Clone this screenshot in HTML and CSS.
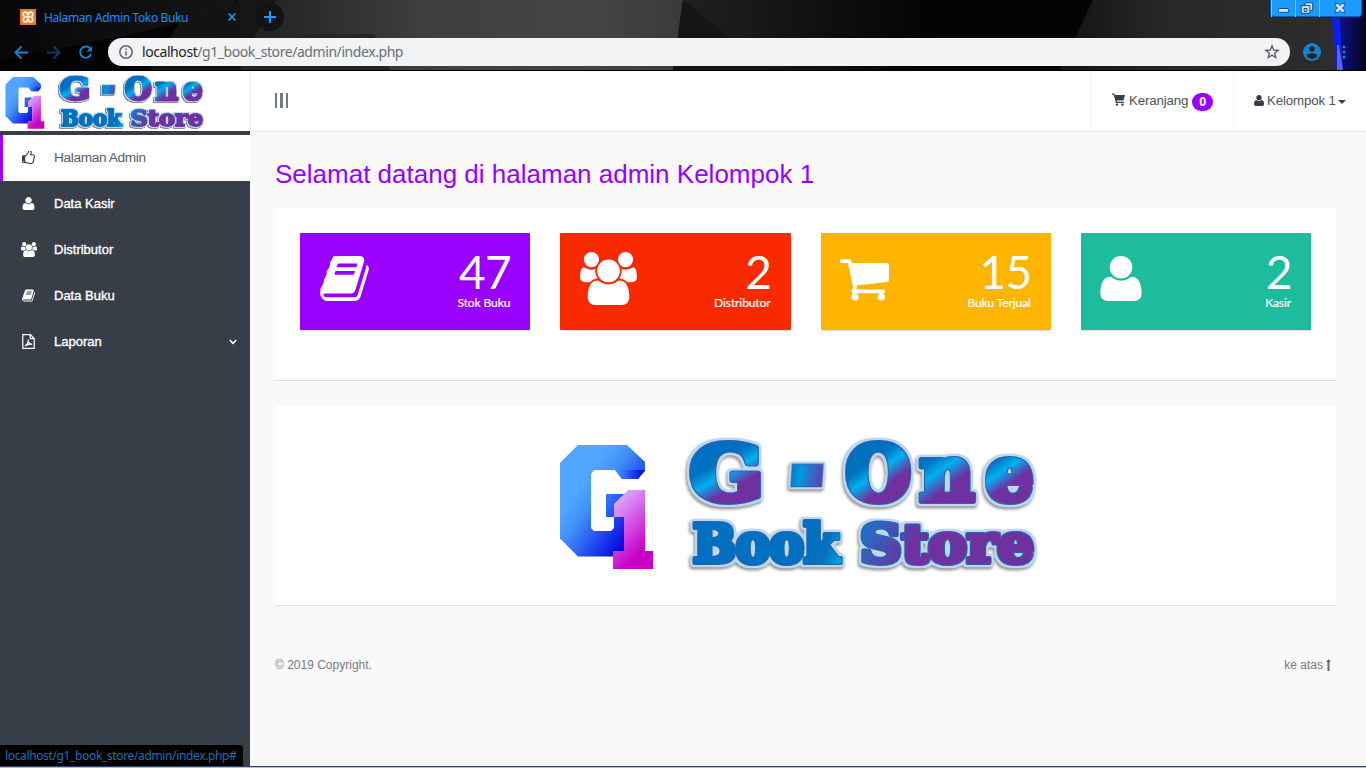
FILE: index.html
```html
<!DOCTYPE html>
<html lang="id">
<head>
<meta charset="utf-8">
<title>Halaman Admin Toko Buku</title>
<link rel="stylesheet" href="styles.css">
</head>
<body>
<svg class="sprite" aria-hidden="true">
  <defs>
    <linearGradient id="g-blue" gradientUnits="userSpaceOnUse" x1="560" y1="470" x2="645" y2="530"><stop offset=".25" stop-color="#4fa5ff"/><stop offset=".42" stop-color="#4292fa"/><stop offset=".95" stop-color="#0000e0"/></linearGradient>
    <linearGradient id="g-tip" x1="0" x2="1"><stop offset="0" stop-color="#4a9dfb"/><stop offset="1" stop-color="#0000e0"/></linearGradient>
    <linearGradient id="g-pink" x1="0" y1="0" x2=".5" y2="1"><stop offset=".1" stop-color="#dfb0ff"/><stop offset=".9" stop-color="#c800c8"/></linearGradient>
    <linearGradient id="w-g" gradientUnits="userSpaceOnUse" x1="704" y1="450" x2="744" y2="501"><stop offset=".28" stop-color="#0070c0"/><stop offset=".5" stop-color="#00b0f0"/><stop offset=".76" stop-color="#7030a0"/></linearGradient>
    <linearGradient id="w-d" gradientUnits="objectBoundingBox" x1="0" y1=".3" x2=".8" y2=".8"><stop offset=".1" stop-color="#0070c0"/><stop offset=".45" stop-color="#0098e0"/><stop offset="1" stop-color="#6a3aa8"/></linearGradient>
    <linearGradient id="w-o" gradientUnits="userSpaceOnUse" x1="858" y1="448" x2="896" y2="501"><stop offset=".28" stop-color="#0070c0"/><stop offset=".48" stop-color="#00b0f0"/><stop offset=".72" stop-color="#7030a0"/></linearGradient>
    <linearGradient id="w-n" gradientUnits="userSpaceOnUse" x1="926" y1="456" x2="960" y2="503"><stop offset=".1" stop-color="#0070c0"/><stop offset=".35" stop-color="#00b0f0"/><stop offset=".65" stop-color="#7030a0"/></linearGradient>
    <linearGradient id="w-e" gradientUnits="userSpaceOnUse" x1="992" y1="456" x2="1022" y2="500"><stop offset=".1" stop-color="#0070c0"/><stop offset=".35" stop-color="#00b0f0"/><stop offset=".62" stop-color="#7030a0"/></linearGradient>
    <linearGradient id="w-book" gradientUnits="userSpaceOnUse" x1="690" y1="520" x2="845" y2="566"><stop offset=".85" stop-color="#0070c0"/><stop offset="1" stop-color="#00b0f0"/></linearGradient>
    <linearGradient id="w-store" gradientUnits="userSpaceOnUse" x1="858" y1="535" x2="905" y2="560"><stop offset="0" stop-color="#1b74c8"/><stop offset="1" stop-color="#7030a0"/></linearGradient>
    <filter id="outline" filterUnits="userSpaceOnUse" x="675" y="430" width="375" height="150" color-interpolation-filters="sRGB">
      <feMorphology in="SourceAlpha" operator="dilate" radius=".6" result="a"/>
      <feFlood flood-color="#2b62ae"/><feComposite in2="a" operator="in" result="edge"/>
      <feMorphology in="SourceAlpha" operator="dilate" radius="3" result="m"/>
      <feGaussianBlur in="m" stdDeviation=".8" result="mb"/>
      <feComponentTransfer in="mb" result="b"><feFuncA type="linear" slope="2.6" intercept="-.6"/></feComponentTransfer>
      <feFlood flood-color="#bdd7ee"/><feComposite in2="b" operator="in" result="rim"/>
      <feOffset in="b" dx="-1.5" dy="2" result="o"/><feGaussianBlur in="o" stdDeviation="1.5" result="s"/>
      <feFlood flood-color="#000" flood-opacity=".45"/><feComposite in2="s" operator="in" result="shadow"/>
      <feMerge><feMergeNode in="shadow"/><feMergeNode in="rim"/><feMergeNode in="edge"/><feMergeNode in="SourceGraphic"/></feMerge>
    </filter>
    <symbol id="logo" viewBox="560 440 480 132" overflow="visible">
      <path fill="url(#g-blue)" d="M560 463l18-18h49l18 17v9l-7 8h-16l-7-9h-21l-3 4v54l3 3h17l3-3v-11h-8v-23h18v57h-10v5.500h-36l-18-18z"/>
      <path fill="url(#g-tip)" d="M615 470h30l-7 9h-16z"/>
      <path fill="url(#g-pink)" d="M614 504l14-14h17v61h8v18h-40v-18h11v-34h-10z"/>
      <g filter="url(#outline)" class="word">
        <text font-size="74" transform="translate(690 500) scale(1.16 1)" class="cap" fill="#0070c0"><tspan fill="url(#w-gl)" stroke="url(#w-gl)">G</tspan></text>
        <text font-size="74" transform="translate(784 519) skewX(-4) scale(1.3 2.2)" fill="url(#w-d)" class="dash">-</text>
        <text font-size="74" y="500" class="cap"><tspan x="846" fill="url(#w-o)" stroke="url(#w-o)">O</tspan><tspan x="920" fill="url(#w-n)" stroke="url(#w-n)">n</tspan><tspan x="986" fill="url(#w-e)" stroke="url(#w-e)">e</tspan></text>
        <text font-size="53" x="693" y="562" textLength="146" lengthAdjust="spacingAndGlyphs" fill="url(#w-book)" stroke="url(#w-book)">Book</text>
        <text font-size="53" x="860" y="562" textLength="174" lengthAdjust="spacingAndGlyphs" fill="url(#w-store)" stroke="url(#w-store)">Store</text>
      </g>
    </symbol>
    <linearGradient id="w-gl" gradientUnits="userSpaceOnUse" x1="12" y1="-50" x2="46" y2="1"><stop offset=".28" stop-color="#0070c0"/><stop offset=".5" stop-color="#00b0f0"/><stop offset=".74" stop-color="#7030a0"/></linearGradient>
    <symbol id="user" viewBox="0 0 1408 1536"><path transform="matrix(1 0 0 -1 0 1408)" d="M1408 131q0-120-73-189.5t-194-69.5h-874q-121 0-194 69.5t-73 189.5q0 53 3.5 103.5t14 109t26.5 108.5t43 97.5t62 81t85.5 53.5t111.5 20q9 0 42-21.5t74.5-48t108-48t133.5-21.5t133.5 21.5t108 48t74.5 48t42 21.5q61 0 111.5-20t85.5-53.5t62-81t43-97.5t26.5-108.5t14-109t3.5-103.5zM1088 1024q0-159-112.5-271.5t-271.5-112.5t-271.5 112.5t-112.5 271.5t112.5 271.5t271.5 112.5t271.5-112.5t112.5-271.5z"/></symbol>
    <symbol id="users" viewBox="0 0 1920 1792"><path transform="matrix(1 0 0 -1 0 1536)" d="M593 640q-162-5-265-128h-134q-82 0-138 40.5t-56 118.5q0 353 124 353q6 0 43.5-21t97.5-42.5t119-21.5q67 0 133 23q-5-37-5-66q0-139 81-256zM1664 3q0-120-73-189.5t-194-69.5h-874q-121 0-194 69.5t-73 189.5q0 53 3.5 103.5t14 109t26.5 108.5t43 97.5t62 81t85.5 53.5t111.5 20q10 0 43-21.5t73-48t107-48t135-21.5t135 21.5t107 48t73 48t43 21.5q61 0 111.5-20t85.5-53.5t62-81t43-97.5t26.5-108.5t14-109t3.5-103.5zM640 1280q0-106-75-181t-181-75t-181 75t-75 181t75 181t181 75t181-75t75-181zM1344 896q0-159-112.5-271.5t-271.5-112.5t-271.5 112.5t-112.5 271.5t112.5 271.5t271.5 112.5t271.5-112.5t112.5-271.5zM1920 671q0-78-56-118.5t-138-40.5h-134q-103 123-265 128q81 117 81 256q0 29-5 66q66-23 133-23q59 0 119 21.5t97.5 42.5t43.5 21q124 0 124-353zM1792 1280q0-106-75-181t-181-75t-181 75t-75 181t75 181t181 75t181-75t75-181z"/></symbol>
    <symbol id="book" viewBox="0 0 1664 1536"><path transform="matrix(1 0 0 -1 0 1408)" d="M1639 1058q40-57 18-129l-275-906q-19-64-76.5-107.5t-122.5-43.5h-923q-77 0-148.5 53.5t-99.5 131.5q-24 67-2 127q0 4 3 27t4 37q1 8-3 21.5t-3 19.5q2 11 8 21t16.5 23.5t16.5 23.5q23 38 45 91.5t30 91.5q3 10 .5 30t-.5 28q3 11 17 28t17 23q21 36 42 92t25 90q1 9-2.5 32t.5 28q4 13 22 30.5t22 22.5q19 26 42.5 84.5t27.5 96.5q1 8-3 25.5t-2 26.5q2 8 9 18t18 23t17 21q8 12 16.5 30.5t15 35t16 36t19.5 32t26.5 23.5t36 11.5t47.5-5.5l-1-3q38 9 51 9h761q74 0 114-56t18-130l-274-906q-36-119-71.5-153.5t-128.5-34.5h-869q-27 0-38-15q-11-16-1-43q24-70 144-70h923q29 0 56 15.5t35 41.5l300 987q7 22 5 57q38-15 59-43zM575 1056q-4-13 2-22.5t20-9.5h608q13 0 25.5 9.5t16.5 22.5l21 64q4 13-2 22.5t-20 9.5h-608q-13 0-25.5-9.5t-16.5-22.5zM492 800q-4-13 2-22.5t20-9.5h608q13 0 25.5 9.5t16.5 22.5l21 64q4 13-2 22.5t-20 9.5h-608q-13 0-25.5-9.5t-16.5-22.5z"/></symbol>
    <symbol id="cart" viewBox="0 0 1664 1408"><path transform="matrix(1 0 0 -1 0 1280)" d="M640 0q0-52-38-90t-90-38t-90 38t-38 90t38 90t90 38t90-38t38-90zM1536 0q0-52-38-90t-90-38t-90 38t-38 90t38 90t90 38t90-38t38-90zM1664 1088v-512q0-24-16.5-42.5t-40.5-21.5l-1044-122q13-60 13-70q0-16-24-64h920q26 0 45-19t19-45t-19-45t-45-19h-1024q-26 0-45 19t-19 45q0 11 8 31.5t16 36t21.5 40t15.5 29.5l-177 823h-204q-26 0-45 19t-19 45t19 45t45 19h256q16 0 28.5-6.5t19.5-15.5t13-24.5t8-26t5.5-29.5t4.5-26h1201q26 0 45-19t19-45z"/></symbol>
    <symbol id="thumb" viewBox="128 128 1536 1536"><path d="M384 1344q0-26-19-45t-45-19-45 19-19 45 19 45 45 19 45-19 19-45zm1152-576q0-51-39-89.5t-89-38.5h-352q0-58 48-159.5t48-160.5q0-98-32-145t-128-47q-26 26-38 85t-30.5 125.5-59.5 109.5q-22 23-77 91-4 5-23 30t-31.5 41-34.5 42.5-40 44-38.5 35.5-40 27-35.5 9h-32v640h32q13 0 31.5 3t33 6.5 38 11 35 11.5 35.5 12.5 29 10.5q211 73 342 73h121q192 0 192-167 0-26-5-56 30-16 47.5-52.5t17.5-73.5-18-69q53-50 53-119 0-25-10-55.5t-25-47.5q32-1 53.5-47t21.5-81zm128-1q0 89-49 163 9 33 9 69 0 77-38 144 3 21 3 43 0 101-60 178 1 139-85 219.5t-227 80.5h-129q-96 0-189.5-22.5t-216.5-65.5q-116-40-138-40h-288q-53 0-90.5-37.5t-37.5-90.5v-640q0-53 37.5-90.5t90.5-37.5h274q36-24 137-155 58-75 107-128 24-25 35.5-85.5t30.5-126.5 62-108q39-37 90-37 84 0 151 32.5t102 101.5 35 186q0 93-48 192h176q104 0 180 76t76 179z"/></symbol>
  </defs>
</svg>

<header class="browser">
  <svg class="theme" viewBox="0 0 1366 70" preserveAspectRatio="none">
    <defs>
      <linearGradient id="t0"><stop offset="0" stop-color="#070709"/><stop offset="1" stop-color="#151515"/></linearGradient>
      <linearGradient id="t1"><stop offset="0" stop-color="#222"/><stop offset=".4" stop-color="#3f3f3f"/><stop offset=".8" stop-color="#444"/><stop offset="1" stop-color="#3a3a3a"/></linearGradient>
      <linearGradient id="t2"><stop offset="0" stop-color="#202020"/><stop offset="1" stop-color="#020203"/></linearGradient>
      <linearGradient id="t3"><stop offset="0" stop-color="#131314"/><stop offset=".4" stop-color="#282828"/><stop offset="1" stop-color="#2d2d2d"/></linearGradient>
      <linearGradient id="t4"><stop offset="0" stop-color="#10108c"/><stop offset="1" stop-color="#04041c"/></linearGradient>
    </defs>
    <path fill="url(#t0)" d="M0 0h1366v70H0z"/>
    <path fill="#020203" d="M0 60L135 33 240 6V70H0z" opacity=".7"/>
    <path fill="url(#t0)" d="M0 0H234L240 7 130 35 0 60z"/>
    <path fill="#1b1b1b" d="M180 21L240 7 236 0h60l-50 70H150z" opacity=".7"/>
    <path fill="url(#t1)" d="M276 0h407l-10 70H390L374 34H256z"/>
    <path fill="#262626" d="M256 34h118l16 36H240z"/>
    <path fill="#151515" d="M683 0l87 70h-97z"/>
    <path fill="url(#t2)" d="M683 0h257v70H770z"/>
    <path fill="#040306" d="M930 0h163l-32 70H930z"/>
    <path fill="url(#t3)" d="M1093 0h240l8 70h-281z"/>
    <path fill="url(#t4)" d="M1339 0h27v70h-22z"/>
    <path fill="#101de8" d="M1330 0h9l4 70h-6z"/>
    <path fill="#5562ff" d="M1337 45l2 0 4 25h-6z"/>
  </svg>
  <div class="tabs">
    <svg class="favicon" viewBox="0 0 16 16"><rect width="16" height="16" rx="1" fill="#fb7a24"/><rect x="1" y="1" width="14" height="14" fill="none" stroke="#e8711f"/><path d="M5.500 3.200c-3 0-3 3.300-.7 4.800-2.300 1.500-2.300 4.800.7 4.800 1.500 0 2-1.200 2-2.400h1c0 1.200.5 2.400 2 2.400 3 0 3-3.300.7-4.800 2.300-1.500 2.300-4.800-.7-4.800-1.500 0-2 1.200-2 2.400h-1c0-1.200-.5-2.400-2-2.400z" fill="none" stroke="#fff" stroke-width="1.700"/><path d="M6 8h4" stroke="#fff" stroke-width="1.500"/></svg>
    <span class="tab-title">Halaman Admin Toko Buku</span>
    <svg class="tab-close" viewBox="0 0 8 8"><path d="M.5.5l7 7m0-7l-7 7"/></svg>
    <span class="new-tab"><svg viewBox="0 0 12 12"><path d="M6 0v12M0 6h12"/></svg></span>
    <span class="window-buttons">
      <svg class="win-min" viewBox="0 0 24 17"><rect x="6.500" y="8.500" width="11" height="4" rx="1.500"/></svg>
      <svg class="win-max" viewBox="0 0 24 17"><path d="M9.500 2.500h8v8h-3v3h-9v-8h4z"/><path d="M8.500 5.500h6v5M8.500 8.500h3v3h-3z"/></svg>
      <svg class="win-close" viewBox="0 0 41 17"><path d="M15.500 3.500h3l2 2 2-2h3v2l-2.500 2.500 2.500 2.500v2h-3l-2-2-2 2h-3v-2l2.500-2.500-2.500-2.500z"/></svg>
    </span>
  </div>
  <div class="toolbar">
    <svg class="nav-icon back" viewBox="0 0 16 16"><path d="M15 8H2M8 1.500L1.500 8 8 14.500"/></svg>
    <svg class="nav-icon forward" viewBox="0 0 16 16"><path d="M1 8h13M8 1.500L14.500 8 8 14.500"/></svg>
    <svg class="nav-icon reload" viewBox="0 0 16 16"><path d="M13.200 4.200A6 6 0 1 0 14 9.500"/><path class="solid" d="M15 1v6H9z"/></svg>
    <div class="address">
      <svg class="info" viewBox="0 0 14 14"><circle cx="7" cy="7" r="6.200"/><path d="M7 6.200v4.300M7 3.500v1.500"/></svg>
      <span class="url"><b>localhost</b>/g1_book_store/admin/index.php</span>
      <svg class="star" viewBox="0 0 16 16"><path d="M8 1.800l1.700 4.200 4.400.3-3.400 2.900 1.100 4.400L8 11.200l-3.800 2.400 1.100-4.400L1.900 6.300l4.400-.3z"/></svg>
    </div>
    <svg class="profile" viewBox="0 0 18 18"><circle cx="9" cy="9" r="9" fill="#1583d0"/><circle cx="9" cy="5.800" r="2.800" fill="#222"/><path d="M3.600 13a6.500 6.500 0 0 0 10.800 0c0-3.600-10.800-3.600-10.800 0z" fill="#222"/></svg>
    <svg class="menu-dots" viewBox="0 0 4 14"><circle cx="2" cy="2" r="1.500"/><circle cx="2" cy="7" r="1.500"/><circle cx="2" cy="12" r="1.500"/></svg>
  </div>
</header>

<div class="app">
  <aside class="sidebar">
    <a class="brand"><svg viewBox="0 0 480 132"><use href="#logo" width="480" height="132"/></svg></a>
    <nav class="side-nav">
      <a class="item active"><svg class="ico"><use href="#thumb"/></svg><span>Halaman Admin</span></a>
      <a class="item"><svg class="ico"><use href="#user"/></svg><span>Data Kasir</span></a>
      <a class="item"><svg class="ico wide"><use href="#users"/></svg><span>Distributor</span></a>
      <a class="item"><svg class="ico"><use href="#book"/></svg><span>Data Buku</span></a>
      <a class="item"><svg class="ico pdf" viewBox="0 0 13 15"><path d="M8.500.7H.8v13.600h11.400V4.500zM8.300 1v3.700H12"/><path d="M3 12c2.500-1.800 3.500-4 3.200-6.300C6 8.500 7.500 10 10.200 10.300 7.500 9.800 5 10.500 3 12z"/></svg><span>Laporan</span><svg class="chevron" viewBox="0 0 8 6"><path d="M.8 1l3.200 3.300L7.200 1"/></svg></a>
    </nav>
  </aside>
  <div class="page">
    <div class="topbar">
      <span class="burger"><i></i><i></i><i></i></span>
      <a class="top-item basket"><svg class="top-cart" viewBox="0 0 13 13"><path d="M0 .5h2.300l.6 1.500H13l-1.600 5.500H4.700l.3 1.300h6.800V10H4L1.700 1.700H0z"/><circle cx="5" cy="11.600" r="1.200"/><circle cx="10.500" cy="11.600" r="1.200"/></svg><span>Keranjang</span><b class="badge">0</b></a>
      <a class="top-item account"><svg class="top-user"><use href="#user"/></svg><span>Kelompok 1</span><i class="caret"></i></a>
    </div>
    <main class="content">
      <h1>Selamat datang di halaman admin Kelompok 1</h1>
      <section class="panel stats">
        <div class="card purple"><svg class="big book"><use href="#book"/></svg><div class="figures"><strong>47</strong><span>Stok Buku</span></div></div>
        <div class="card red"><svg class="big users"><use href="#users"/></svg><div class="figures"><strong>2</strong><span>Distributor</span></div></div>
        <div class="card amber"><svg class="big cart"><use href="#cart"/></svg><div class="figures"><strong>15</strong><span>Buku Terjual</span></div></div>
        <div class="card teal"><svg class="big user"><use href="#user"/></svg><div class="figures"><strong>2</strong><span>Kasir</span></div></div>
      </section>
      <section class="panel hero"><svg viewBox="0 0 480 132"><use href="#logo" width="480" height="132"/></svg></section>
      <footer class="footer"><span>© 2019 Copyright.</span><a class="to-top">ke atas<svg viewBox="0 0 5 12"><path d="M2.500 0L5 3H3.500v9h-2V3H0z"/></svg></a></footer>
    </main>
  </div>
  <div class="status">localhost/g1_book_store/admin/index.php#</div>
</div>
<div class="taskbar-edge"></div>
</body>
</html>
```

FILE: styles.css
```css
* { box-sizing: border-box; }
body { margin: 0; width: 1366px; height: 768px; overflow: hidden; display: flex; flex-direction: column; font: 13px "Liberation Sans", Arial, sans-serif; color: #373e4a; background: #f9f9f9; }
svg { display: block; flex: none; overflow: visible; }
.sprite { position: absolute; width: 0; height: 0; }
.word { font-family: "DejaVu Serif", serif; font-weight: 700; stroke-width: 4; stroke-linejoin: round; }
.cap { stroke-width: 6; }
.dash { stroke: none; }

/* Browser frame */
.browser { position: relative; height: 71px; flex: none; border-bottom: 1px solid #000; background: #000; font-family: "Noto Sans", "Open Sans", sans-serif; }
.theme { position: absolute; inset: 0; width: 1366px; height: 70px; }
.tabs, .toolbar { position: relative; display: flex; align-items: center; }
.tabs { height: 34px; padding-left: 20px; }
.favicon { width: 16px; height: 16px; }
.tab-title { width: 184px; margin-left: 8px; font-size: 12px; letter-spacing: -.38px; color: #1a8cff; white-space: nowrap; }
.tab-close { width: 8px; height: 8px; fill: none; stroke: #1a9bff; stroke-width: 1.600; }
.new-tab { display: grid; place-items: center; width: 28px; height: 28px; margin-left: 20px; border-radius: 50%; background: #121314; }
.new-tab svg { width: 12px; height: 12px; fill: none; stroke: #1a9bff; stroke-width: 2; }
.window-buttons { display: flex; align-self: flex-start; width: 92px; height: 17px; margin-left: auto; margin-right: 4px; background: #1a9bff; border: solid #0a5fae; border-width: 0 1px 1px; border-radius: 0 0 4px 4px; box-shadow: 0 0 0 1px #222; }
.window-buttons svg { height: 17px; width: 24px; fill: #cfe4ff; stroke: #12457e; stroke-width: 1; border-left: 1px solid #7cc4ff; }
.window-buttons .win-close { width: 41px; }
.toolbar { height: 36px; padding-left: 14px; }
.nav-icon { width: 15px; height: 15px; fill: none; stroke: #1583d0; stroke-width: 2; }
.nav-icon.forward { margin-left: 17px; stroke: #0d3c5e; }
.nav-icon.reload { margin-left: 17px; }
.nav-icon .solid { fill: #1583d0; stroke: none; }
.address { display: flex; align-items: center; width: 1182px; height: 28px; margin-left: 15px; padding: 0 11px; border-radius: 14px; background: #f1f3f4; }
.info { width: 14px; height: 14px; fill: none; stroke: #5f6368; stroke-width: 1.500; }
.url { margin: -2px 0 0 9px; font-size: 14px; letter-spacing: -.43px; color: #6b6f74; }
.url b { font-weight: 400; color: #222; }
.star { width: 16px; height: 16px; margin-left: auto; margin-right: -1px; fill: none; stroke: #5f6368; stroke-width: 1.400; }
.profile { width: 18px; height: 18px; margin-left: 13px; }
.menu-dots { width: 4px; height: 14px; margin-left: 21px; fill: #1583d0; }

/* Application */
.app { position: relative; display: flex; height: 695px; flex: none; }
.sidebar { width: 250px; background: #373e47; }
.brand { display: block; height: 60px; padding: 4px 0 0 5px; background: #fff; }
.brand svg { width: 201px; height: 55px; }
.side-nav { padding-top: 4px; }
.item { display: flex; align-items: center; height: 46px; padding: 0 13px 0 22px; color: #fff; }
.item span { margin: -2px 0 0 19px; -webkit-text-stroke: .35px; }
.item.active { padding-left: 19px; border-left: 3px solid #90f; background: #fff; color: #373e4a; }
.item.active span { font-size: 13.700px; letter-spacing: -.38px; -webkit-text-stroke: 0; color: #565d68; }
.ico { width: 13px; height: 13px; margin-top: -2px; fill: currentColor; }
.ico.wide { width: 16px; height: 15px; margin: -2px -2px 0 -1px; }
.ico.pdf { height: 15px; fill: none; stroke: #fff; stroke-width: 1.200; }
.chevron { width: 8px; height: 6px; margin-left: auto; fill: none; stroke: #fff; stroke-width: 1.600; }
.page { flex: 1; }
.topbar { display: flex; align-items: stretch; height: 61px; background: #fff; border-bottom: 1px solid #e6e6e6; border-left: 1px solid #eee; }
.burger { display: flex; gap: 3px; align-self: center; margin: -1px auto 0 24px; }
.burger i { width: 2.400px; height: 15px; background: #737a85; }
.top-item { display: flex; align-items: center; border-left: 1px solid #f3f3f3; }
.basket { width: 142px; padding-left: 20px; }
.account { width: 133px; padding-left: 20px; }
.top-item span { margin: -2px 0 0 4px; font-size: 13.300px; letter-spacing: -.15px; color: #4b525d; }
.top-cart { width: 13px; height: 13px; margin-top: -3px; fill: #373e4a; }
.top-user { width: 10px; height: 11px; margin-top: -1px; fill: #373e4a; }
.top-item.account span { margin-left: 3px; }
.badge { width: 21px; height: 18px; margin: 2px 0 0 4px; border-radius: 9px; background: #90f; color: #fff; font: 700 12px/18px "Open Sans", sans-serif; text-align: center; }
.caret { margin: 2px 0 0 2px; border: 4px solid transparent; border-top-color: #373e4a; border-bottom: 0; }
.content { padding: 0 30px 0 25px; }
h1 { height: 76px; margin: 0; padding-top: 27px; font-size: 26px; line-height: 30px; font-weight: 400; color: #90f; white-space: nowrap; }
.panel { width: 1061px; background: #fff; border-bottom: 1px solid #dedede; }
.stats { display: grid; grid-template-columns: repeat(4, 230.250px); gap: 30px; align-items: start; height: 173px; padding: 25px; }
.card { display: flex; justify-content: space-between; height: 97px; padding: 0 20px; border-radius: 1px; box-shadow: 0 1px 1px #0002; color: #fff; fill: #fff; font-family: Lato, sans-serif; }
.purple { background: #90f; }
.red { background: #fa2a00; }
.amber { background: #ffb400; }
.teal { background: #1dbc9c; }
.big { margin-top: 23px; margin-left: -.5px; }
.big.book { width: 49px; height: 45px; }
.big.users { width: 57px; height: 53px; margin-top: 19px; }
.big.cart { width: 49px; height: 42px; margin-top: 26px; }
.big.user { width: 42px; height: 45px; }
.figures { display: flex; flex-direction: column; align-items: flex-end; padding-top: 16px; }
.figures strong { font-size: 46px; line-height: 46px; font-weight: 400; letter-spacing: -.5px; margin-right: -1px; }
.figures span { font-size: 12px; line-height: 16px; font-weight: 400; letter-spacing: -.1px; -webkit-text-stroke: .2px; }
.hero { height: 201px; margin-top: 24px; padding: 35px 0 0 285px; }
.hero svg { width: 480px; height: 132px; }
.footer { display: flex; justify-content: space-between; width: 1056px; padding-top: 52px; font-size: 12px; color: #777c84; }
.to-top { display: flex; align-items: center; gap: 3px; }
.to-top svg { width: 5px; height: 12px; fill: #656b75; }
.status { position: absolute; left: 0; bottom: 0; width: 243px; height: 21px; padding-left: 5px; border-top-right-radius: 3px; background: #000; color: #1f6fb8; font: 12px/21px "Noto Sans", sans-serif; letter-spacing: -.36px; white-space: nowrap; }
.taskbar-edge { height: 2px; background: #a9bddd; border-top: 1px solid #2b4261; }
```
